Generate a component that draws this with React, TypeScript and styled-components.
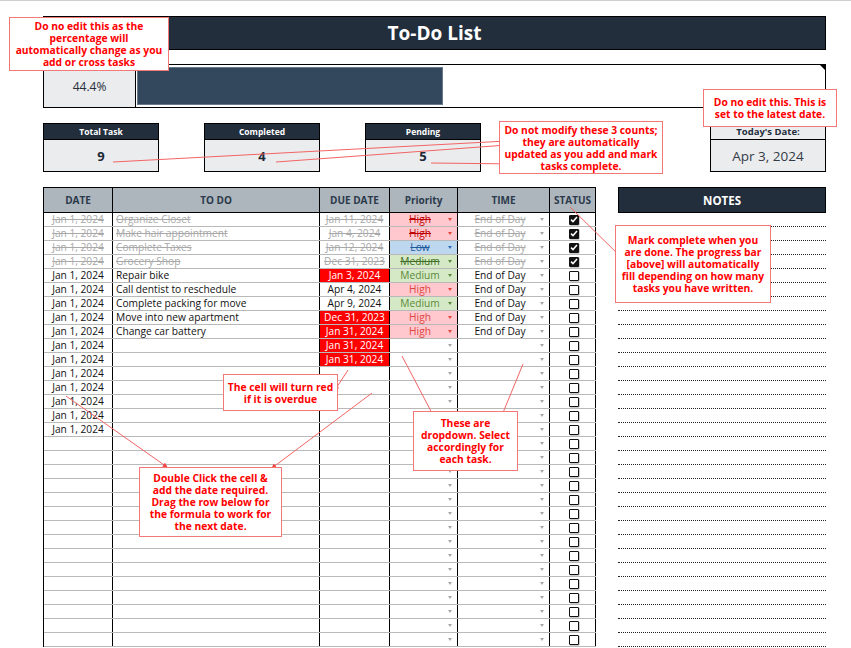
import React from 'react';
import styled, { createGlobalStyle } from 'styled-components';

type Level = 'High' | 'Medium' | 'Low' | '';

type Task = {
  date?: string;
  todo?: string;
  due?: string;
  overdue?: boolean;
  priority?: Level;
  time?: string;
  done?: boolean;
};

const GlobalStyle = createGlobalStyle`
  html, body { margin: 0; padding: 0; background: #fff; }
  body { font-family: "Open Sans", "Liberation Sans", sans-serif; color: #1b1b1b; }
  *, *::before, *::after { box-sizing: border-box; }
`;

const Page = styled.div`
  position: relative;
  width: 851px;
  height: 648px;
  overflow: hidden;
  border-top: 1px solid #cfcfcf;
  padding: 15px 25px 0 43px;
`;

const TitleBar = styled.div`
  height: 34px;
  background: #222e3c;
  border: 1px solid #000;
  display: flex;
  align-items: center;
  justify-content: center;
  color: #fff;
  font-weight: 700;
  font-size: 19px;
`;

const ProgressRow = styled.div`
  position: relative;
  margin-top: 14px;
  height: 44px;
  border: 1px solid #000;
  display: flex;

  &::after {
    content: '';
    position: absolute;
    top: 0;
    right: 0;
    border-top: 5px solid #000;
    border-left: 5px solid transparent;
  }
`;

const Percent = styled.div`
  width: 92px;
  background: #ebecee;
  border-right: 1px solid #000;
  display: flex;
  align-items: center;
  justify-content: center;
  font-size: 12px;
  color: #262e38;
`;

const Bar = styled.div`
  margin: 2px 0 2px 1px;
  width: 306px;
  background: #34485d;
  border: 1px solid #66788a;
`;

const StatsRow = styled.div`
  margin-top: 15px;
  height: 49px;
  display: flex;
  gap: 45px;
`;

const StatBox = styled.div<{ $push?: boolean }>`
  width: 116px;
  border: 1px solid #000;
  display: flex;
  flex-direction: column;
  margin-left: ${(p) => (p.$push ? 'auto' : '0')};
`;

const StatHead = styled.div<{ $light?: boolean }>`
  height: 16px;
  background: ${(p) => (p.$light ? '#ebecee' : '#222e3c')};
  color: ${(p) => (p.$light ? '#222e3c' : '#fff')};
  border-bottom: 1px solid #000;
  display: flex;
  align-items: center;
  justify-content: center;
  font-size: ${(p) => (p.$light ? '9.5px' : '8.5px')};
  font-weight: 700;
`;

const StatValue = styled.div<{ $plain?: boolean }>`
  flex: 1;
  background: #ebecee;
  display: flex;
  align-items: center;
  justify-content: center;
  font-size: ${(p) => (p.$plain ? '13.5px' : '13px')};
  font-weight: ${(p) => (p.$plain ? 400 : 700)};
  color: ${(p) => (p.$plain ? '#333b45' : '#1d2836')};
`;

const Main = styled.div`
  margin-top: 15px;
  display: flex;
  gap: 22px;
  align-items: flex-start;
`;

const Table = styled.div`
  width: 553px;
  border-left: 1px solid #000;
`;

const cols = '69px 207px 70px 68px 92px 46px';

const HeadRow = styled.div`
  display: grid;
  grid-template-columns: ${cols};
  height: 26px;
  background: #adb5bd;
  border-top: 1px solid #000;
  border-bottom: 1px solid #000;
`;

const HeadCell = styled.div`
  border-right: 1px solid #000;
  display: flex;
  align-items: center;
  justify-content: center;
  font-size: 10px;
  font-weight: 700;
  color: #2b3a4b;
`;

const Row = styled.div`
  display: grid;
  grid-template-columns: ${cols};
  height: 14px;
  border-bottom: 1px solid #b9b9b9;
`;

const Cell = styled.div<{ $align?: 'left' | 'center'; $done?: boolean }>`
  border-right: 1px solid #000;
  display: flex;
  align-items: center;
  justify-content: ${(p) => (p.$align === 'left' ? 'flex-start' : 'center')};
  padding-left: ${(p) => (p.$align === 'left' ? '3px' : '0')};
  font-size: 10.2px;
  line-height: 13px;
  white-space: nowrap;
  overflow: hidden;
  color: ${(p) => (p.$done ? '#a9a9a9' : '#111')};
  text-decoration: ${(p) => (p.$done ? 'line-through' : 'none')};
`;

const DueCell = styled(Cell)<{ $late?: boolean }>`
  background: ${(p) => (p.$late ? '#ff0000' : 'transparent')};
  color: ${(p) => (p.$late ? '#fff' : p.$done ? '#a9a9a9' : '#111')};
`;

const levelStyle: Record<string, { bg: string; fg: string; doneFg: string }> = {
  High: { bg: '#ffc7ce', fg: '#e0463e', doneFg: '#c00000' },
  Medium: { bg: '#d6e9c6', fg: '#5a8a3a', doneFg: '#3f6f25' },
  Low: { bg: '#bdd7ee', fg: '#2f6fb7', doneFg: '#1f5a9e' },
  '': { bg: 'transparent', fg: '#a8a8a8', doneFg: '#a8a8a8' },
};

const DropCell = styled.div<{ $bg?: string }>`
  border-right: 1px solid #000;
  display: flex;
  align-items: center;
  background: ${(p) => p.$bg || 'transparent'};
  font-size: 10.2px;
  line-height: 13px;
  white-space: nowrap;
`;

const DropText = styled.span<{ $color: string; $done?: boolean }>`
  flex: 1;
  text-align: center;
  padding-left: 2px;
  color: ${(p) => p.$color};
  text-decoration: ${(p) => (p.$done ? 'line-through' : 'none')};
`;

const Caret = styled.span<{ $color: string }>`
  width: 0;
  height: 0;
  margin-right: 5px;
  border-left: 2.5px solid transparent;
  border-right: 2.5px solid transparent;
  border-top: 3px solid ${(p) => p.$color};
`;

const StatusCell = styled.div`
  border-right: 1px solid #000;
  display: flex;
  align-items: center;
  justify-content: center;
  padding-left: 2px;
`;

const Box = styled.span<{ $checked?: boolean }>`
  width: 10px;
  height: 10px;
  border: 1.5px solid #111;
  border-radius: 1px;
  background: ${(p) => (p.$checked ? '#111' : '#fff')};
  box-shadow: 0.5px 0.5px 0 #9a9a9a;
  display: flex;
  align-items: center;
  justify-content: center;
`;

const Notes = styled.div`
  width: 209px;
`;

const NotesHead = styled.div`
  height: 26px;
  background: #222e3c;
  border: 1px solid #000;
  display: flex;
  align-items: center;
  justify-content: center;
  color: #fff;
  font-weight: 700;
  font-size: 11.5px;
`;

const NoteLine = styled.div`
  height: 14px;
  border-bottom: 1px dotted #222;
`;

const Callout = styled.div<{ $x: number; $y: number; $w: number; $h: number }>`
  position: absolute;
  left: ${(p) => p.$x}px;
  top: ${(p) => p.$y}px;
  width: ${(p) => p.$w}px;
  height: ${(p) => p.$h}px;
  background: #fff;
  border: 1.5px solid #f47878;
  display: flex;
  align-items: center;
  justify-content: center;
  text-align: center;
  color: #ff0000;
  font-weight: 700;
  font-size: 10.3px;
  line-height: 12px;
  white-space: nowrap;
`;

const Arrows = styled.svg`
  position: absolute;
  left: 0;
  top: 0;
  pointer-events: none;
`;

const dated = 'Jan 1, 2024';

const tasks: Task[] = [
  { date: dated, todo: 'Organize Closet', due: 'Jan 11, 2024', priority: 'High', time: 'End of Day', done: true },
  { date: dated, todo: 'Make hair appointment', due: 'Jan 4, 2024', priority: 'High', time: 'End of Day', done: true },
  { date: dated, todo: 'Complete Taxes', due: 'Jan 12, 2024', priority: 'Low', time: 'End of Day', done: true },
  { date: dated, todo: 'Grocery Shop', due: 'Dec 31, 2023', priority: 'Medium', time: 'End of Day', done: true },
  { date: dated, todo: 'Repair bike', due: 'Jan 3, 2024', overdue: true, priority: 'Medium', time: 'End of Day' },
  { date: dated, todo: 'Call dentist to reschedule', due: 'Apr 4, 2024', priority: 'High', time: 'End of Day' },
  { date: dated, todo: 'Complete packing for move', due: 'Apr 9, 2024', priority: 'Medium', time: 'End of Day' },
  { date: dated, todo: 'Move into new apartment', due: 'Dec 31, 2023', overdue: true, priority: 'High', time: 'End of Day' },
  { date: dated, todo: 'Change car battery', due: 'Jan 31, 2024', overdue: true, priority: 'High', time: 'End of Day' },
  { date: dated, due: 'Jan 31, 2024', overdue: true },
  { date: dated, due: 'Jan 31, 2024', overdue: true },
  { date: dated },
  { date: dated },
  { date: dated },
  { date: dated },
  { date: dated },
];

while (tasks.length < 31) tasks.push({});

const arrows: [number, number, number, number][] = [
  [113, 161, 507, 140],
  [276, 161, 507, 144],
  [431, 162, 519, 163],
  [570, 206, 622, 257],
  [348, 369, 335, 389],
  [402, 355, 433, 414],
  [523, 363, 500, 419],
  [66, 395, 167, 466],
  [372, 392, 272, 467],
];

type Note = { x: number; y: number; w: number; h: number; lines: string[] };

const callouts: Note[] = [
  { x: 9, y: 16, w: 160, h: 54, lines: ['Do no edit this as the', 'percentage will', 'automatically change as you', 'add or cross tasks'] },
  { x: 703, y: 88, w: 134, h: 38, lines: ['Do no edit this. This is', 'set to the latest date.'] },
  {
    x: 499, y: 120, w: 164, h: 53,
    lines: ['Do not modify these 3 counts;', 'they are automatically', 'updated as you add and mark', 'tasks complete.'],
  },
  {
    x: 615, y: 224, w: 156, h: 78,
    lines: ['Mark complete when you', 'are done. The progress bar', '[above] will automatically', 'fill depending on how many', 'tasks you have written.'],
  },
  { x: 223, y: 373, w: 115, h: 37, lines: ['The cell will turn red', 'if it is overdue'] },
  { x: 413, y: 410, w: 105, h: 60, lines: ['These are', 'dropdown. Select', 'accordingly for', 'each task.'] },
  {
    x: 139, y: 466, w: 143, h: 70,
    lines: ['Double Click the cell &', 'add the date required.', 'Drag the row below for', 'the formula to work for', 'the next date.'],
  },
];

const Check = () => (
  <svg width="8" height="7" viewBox="0 0 8 7">
    <path d="M1 3.6 L3 5.6 L7 1" stroke="#fff" strokeWidth="1.5" fill="none" />
  </svg>
);

const Dropdown = ({ value, done, time }: { value?: string; done?: boolean; time?: boolean }) => {
  if (time) {
    const color = done ? '#a9a9a9' : '#111';
    return (
      <DropCell>
        <DropText $color={color} $done={done}>{value}</DropText>
        <Caret $color="#a8a8a8" />
      </DropCell>
    );
  }
  const lv = levelStyle[(value as Level) || ''];
  const color = done ? lv.doneFg : lv.fg;
  return (
    <DropCell $bg={lv.bg}>
      <DropText $color={color} $done={done}>{value}</DropText>
      <Caret $color={lv.fg} />
    </DropCell>
  );
};

const Stat = ({ label, value }: { label: string; value: string }) => (
  <StatBox>
    <StatHead>{label}</StatHead>
    <StatValue>{value}</StatValue>
  </StatBox>
);

export default function App() {
  return (
    <>
      <GlobalStyle />
      <Page>
        <TitleBar>To-Do List</TitleBar>

        <ProgressRow>
          <Percent>44.4%</Percent>
          <Bar />
        </ProgressRow>

        <StatsRow>
          <Stat label="Total Task" value="9" />
          <Stat label="Completed" value="4" />
          <Stat label="Pending" value="5" />
          <StatBox $push>
            <StatHead $light>Today's Date:</StatHead>
            <StatValue $plain>Apr 3, 2024</StatValue>
          </StatBox>
        </StatsRow>

        <Main>
          <Table>
            <HeadRow>
              <HeadCell>DATE</HeadCell>
              <HeadCell>TO DO</HeadCell>
              <HeadCell>DUE DATE</HeadCell>
              <HeadCell>Priority</HeadCell>
              <HeadCell>TIME</HeadCell>
              <HeadCell>STATUS</HeadCell>
            </HeadRow>
            {tasks.map((t, i) => (
              <Row key={i}>
                <Cell $done={t.done}>{t.date}</Cell>
                <Cell $align="left" $done={t.done}>{t.todo}</Cell>
                <DueCell $done={t.done} $late={t.overdue}>{t.due}</DueCell>
                <Dropdown value={t.priority} done={t.done} />
                <Dropdown value={t.time} done={t.done} time />
                <StatusCell>
                  <Box $checked={t.done}>{t.done && <Check />}</Box>
                </StatusCell>
              </Row>
            ))}
          </Table>

          <Notes>
            <NotesHead>NOTES</NotesHead>
            {tasks.map((_, i) => (
              <NoteLine key={i} />
            ))}
          </Notes>
        </Main>

        <Arrows width="851" height="648" viewBox="0 0 851 648">
          <defs>
            <marker id="tip" viewBox="0 0 6 6" refX="5" refY="3" markerWidth="5" markerHeight="5" orient="auto">
              <path d="M0 0 L6 3 L0 6 z" fill="#f04848" />
            </marker>
          </defs>
          {arrows.map(([x1, y1, x2, y2], i) => (
            <line key={i} x1={x1} y1={y1} x2={x2} y2={y2} stroke="#f26464" strokeWidth="1" markerEnd="url(#tip)" />
          ))}
        </Arrows>

        {callouts.map((c, i) => (
          <Callout key={i} $x={c.x} $y={c.y} $w={c.w} $h={c.h}>
            <div>
              {c.lines.map((l, j) => (
                <div key={j}>{l}</div>
              ))}
            </div>
          </Callout>
        ))}
      </Page>
    </>
  );
}
